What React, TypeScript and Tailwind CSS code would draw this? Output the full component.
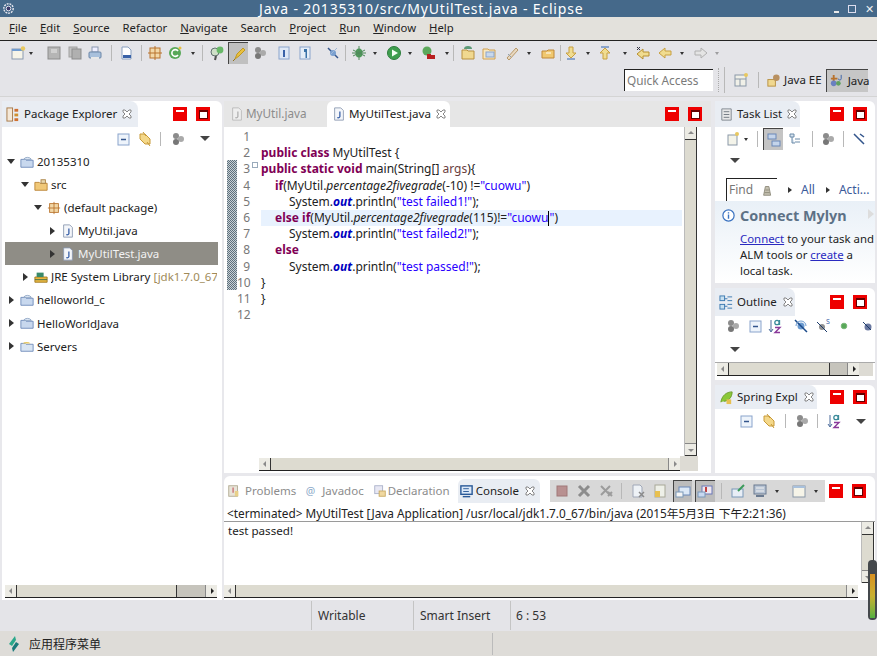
import React from "react";

const paths: Record<string, React.ReactNode> = {
  new: (<><rect x="2" y="4" width="11" height="10" fill="#f6f4e8" stroke="#8a9ab0" /><rect x="2" y="4" width="11" height="2" fill="#6f9bd0" /><circle cx="13" cy="3.5" r="2.2" fill="#e8c860" /></>),
  save: (<><rect x="2" y="2" width="12" height="12" fill="#b5b5b5" stroke="#8d8d8d" /><rect x="5" y="4" width="6" height="4" fill="#d0d0d0" /></>),
  saveall: (<><rect x="2" y="2" width="8" height="10" fill="#c2c2c2" stroke="#a0a0a0" /><rect x="5" y="4" width="9" height="10" fill="#b0b0b0" stroke="#8d8d8d" /></>),
  print: (<><rect x="5" y="2" width="6" height="5" fill="#eef" stroke="#8a98b0" /><rect x="2" y="7" width="12" height="6" rx="1" fill="#a8c0dc" stroke="#6b86a8" /><rect x="4" y="12" width="8" height="2" fill="#e8e8e8" /></>),
  bin: (<><path d="M4 2h6l3 3v9H4z" fill="#fff" stroke="#8aa0c0" /><path d="M5 10h8v3H5z" fill="#3a62a8" /></>),
  pkg: (<><rect x="3" y="3" width="10" height="10" fill="#f2d8a8" stroke="#b8722c" /><path d="M8 1v14M1 8h14" stroke="#b8722c" /></>),
  g: (<><circle cx="8" cy="8" r="6" fill="#58a858" /><path d="M11 6a3.4 3.4 0 1 0 0 4" fill="none" stroke="#fff" strokeWidth="1.6" /><circle cx="13" cy="3" r="1.5" fill="#e8c040" /></>),
  find: (<><circle cx="6" cy="7" r="4" fill="#cfe0c8" stroke="#607070" /><path d="M7 11l-1 4" stroke="#505050" strokeWidth="2" /><circle cx="11" cy="5" r="3.4" fill="#68b868" /></>),
  pen: (<><path d="M4 13l2-5 6-6 2 2-6 6z" fill="#e8c040" stroke="#c09820" /><path d="M2 15l2-2" stroke="#907020" /></>),
  balls: (<><circle cx="6" cy="5" r="3" fill="#8c8c8c" /><circle cx="11" cy="8" r="3" fill="#aaa" /><circle cx="6" cy="11" r="3" fill="#777" /></>),
  boxi: (<><rect x="3" y="2" width="10" height="12" fill="#dfe8f6" stroke="#8aa4cc" /><path d="M7 5h2v7H7z" fill="#3a62a8" /></>),
  para: (<><rect x="3" y="2" width="10" height="12" fill="#e6eef8" stroke="#8aa4cc" /><path d="M7 4h3v9H8.500V7H7z" fill="#3a72a8" /></>),
  pin: (<><path d="M3 3l10 10" stroke="#35558c" strokeWidth="1.500" /><circle cx="8" cy="8" r="3" fill="#7aa0d0" /><path d="M12 3l-7 7" stroke="#a0b8d8" /></>),
  bug: (<><ellipse cx="8" cy="8" rx="3.500" ry="4.500" fill="#4e9a5a" /><path d="M8 1v14M2 5l12 6M14 5L2 11M1 8h14" stroke="#4e8a5a" /></>),
  run: (<><circle cx="8" cy="8" r="6.500" fill="#3e9e4e" stroke="#2e7e3e" /><path d="M6 4.500l6 3.500-6 3.500z" fill="#f4fff4" /></>),
  ext: (<><circle cx="6" cy="6" r="4.500" fill="#5ca85c" /><rect x="6" y="9" width="4" height="5" fill="#b82020" /><rect x="10" y="10" width="4" height="4" fill="#b82020" /></>),
  folder: (<><path d="M2 5h5l1 1h6v8H2z" fill="#f0d890" stroke="#b89040" /><path d="M4 4a4 3 0 0 1 8 0z" fill="#5c9a78" /></>),
  folder2: (<><path d="M2 4h5l1 1h6v9H2z" fill="#f8e8c0" stroke="#d0a050" /><rect x="5" y="7" width="8" height="5" fill="#c8d8ec" stroke="#8aa4cc" /></>),
  wand: (<><path d="M3 13L12 3l2 2-9 10z" fill="#e8d8c0" stroke="#b89868" /><path d="M4 9l3 3" stroke="#90a0b0" /></>),
  folder3: (<><path d="M2 6h5l1-1h6v8H2z" fill="#f0c870" stroke="#c08838" /><path d="M6 8h5" stroke="#fff" /></>),
  down: (<><path d="M6 2h4v6h3l-5 5-5-5h3z" fill="#f0dc90" stroke="#c8a040" /><path d="M4 14h8" stroke="#8aa4cc" strokeWidth="2" /></>),
  up: (<><path d="M6 14V8H3l5-5 5 5h-3v6z" fill="#f0dc90" stroke="#c8a040" /><path d="M4 2h8" stroke="#8aa4cc" strokeWidth="2" /></>),
  backs: (<><path d="M14 7v4H8v3L2 9l6-5v3z" fill="#f0dc90" stroke="#b89030" /><path d="M2 2l3 3M5 2L2 5" stroke="#334" /></>),
  left: (<path d="M14 6v4H8v3L2 8l6-5v3z" fill="#f0dc90" stroke="#c8a040" />),
  right: (<path d="M2 6v4h6v3l6-5-6-5v3z" fill="#e4e4e4" stroke="#b0b0b0" />),
  persp: (<><rect x="2" y="3" width="11" height="11" fill="#f0f0e8" stroke="#8a98a8" /><path d="M2 7h11M7 7v7" stroke="#8a98a8" /><circle cx="13" cy="3" r="2" fill="#e8c860" /></>),
  jee: (<><rect x="2" y="7" width="8" height="7" fill="#f0d890" stroke="#b89040" /><circle cx="11" cy="5" r="3.500" fill="#b89060" /></>),
  java: (<><path d="M2 6h7M5 2v7" stroke="#b8722c" strokeWidth="2" /><circle cx="5" cy="11" r="3" fill="#6a80c0" /><circle cx="10" cy="11" r="2.500" fill="#60a060" /><path d="M13 2v4a1.500 1.500 0 0 1-3 0" fill="none" stroke="#3a62a8" /></>),
  pe: (<><rect x="1" y="1" width="6" height="14" fill="#f4e8d8" stroke="#a87848" /><rect x="9" y="2" width="4" height="3" fill="#d07030" /><rect x="9" y="7" width="4" height="3" fill="#d09030" /><rect x="9" y="12" width="4" height="3" fill="#d07030" /></>),
  collapse: (<><rect x="2" y="3" width="11" height="11" fill="#eef4fb" stroke="#8aa4cc" /><path d="M5 8.500h5" stroke="#33558c" strokeWidth="1.500" /></>),
  link: (<path d="M3 3h5l5 5v5H8L3 8zM6 1l3 4M10 11l3 4" fill="#f4d88a" stroke="#c89a38" />),
  az: (<><path d="M4 2v11M2 11l2 3 2-3" stroke="#4a6a9a" fill="none" /><circle cx="10" cy="4.500" r="2.200" fill="none" stroke="#3a8a9a" strokeWidth="1.300" /><path d="M12.500 2v5" stroke="#3a8a9a" strokeWidth="1.300" /><path d="M8 9.500h5l-5 5h5" fill="none" stroke="#8a3a9a" strokeWidth="1.400" /></>),
  jfile: (<><path d="M3 1h7l3 3v11H3z" fill="#f4f6fa" stroke="#8a98b0" /><path d="M9 5v6a2 2 0 0 1-3 1" fill="none" stroke="#3a62a8" strokeWidth="1.500" /></>),
  jfileg: (<><path d="M3 1h7l3 3v11H3z" fill="#eee" stroke="#b8b8b8" /><path d="M9 5v6a2 2 0 0 1-3 1" fill="none" stroke="#b0b0b0" strokeWidth="1.500" /></>),
  proj: (<><path d="M1 5h5l1 1h8v8H1z" fill="#c8d8ee" stroke="#6a88b8" /><path d="M4 5a5 4 0 0 1 9 0z" fill="#e8f0fa" stroke="#88a0c0" /></>),
  srcf: (<><path d="M1 5h5l1 1h8v8H1z" fill="#f0c878" stroke="#b88030" /><rect x="8" y="2" width="5" height="4" fill="#e8d8b0" stroke="#a88040" /></>),
  jre: (<><path d="M1 8h14v6H1z" fill="#e8b840" stroke="#a07820" /><path d="M3 3h8v5H3z" fill="#3a8a6a" /><path d="M1 11h14" stroke="#3a6a4a" /></>),
  tl: (<><path d="M3 2h10v12H3z" fill="#e8e8e8" stroke="#808890" /><path d="M5 5h6M5 8h6M5 11h6" stroke="#707880" /></>),
  tn: (<><rect x="3" y="4" width="9" height="10" fill="#f4f4ea" stroke="#8a98a8" /><circle cx="12" cy="3" r="2" fill="#e8c860" /></>),
  tree: (<><rect x="2" y="2" width="8" height="5" fill="#c4d4ea" stroke="#6a88b8" /><rect x="6" y="9" width="8" height="5" fill="#c4d4ea" stroke="#6a88b8" /></>),
  tree2: (<path d="M3 3h4v3H3zM8 8h5M8 11h5M5 6v6h3" fill="#d8e4f0" stroke="#6a8aa8" />),
  link2: (<path d="M3 3l10 10M9 3l4 3" stroke="#33558c" strokeWidth="1.500" fill="none" />),
  out: (<><rect x="1" y="1" width="5" height="5" fill="#c8e0f0" stroke="#3a78b0" /><rect x="1" y="10" width="5" height="5" fill="#c8e0f0" stroke="#3a78b0" /><path d="M6 4h3M6 12h3M9 2h5M9 6h5M9 10h5M9 14h5" stroke="#3a78b0" /></>),
  hf: (<><circle cx="8" cy="8" r="3.500" fill="#6a9ad0" /><path d="M2 2l12 12" stroke="#1a4a8a" strokeWidth="1.500" /><path d="M3 8a5 5 0 0 1 10 0" fill="none" stroke="#6a9ad0" /></>),
  hs: (<><circle cx="7" cy="9" r="3" fill="#909090" /><path d="M2 4l10 10" stroke="#1a3a6a" /><text x="11" y="6" fontSize="7" fill="#3a62a8">S</text></>),
  dot: (<circle cx="8" cy="8" r="2.800" fill="#58a858" stroke="#7ab87a" />),
  hl: (<><circle cx="9" cy="9" r="3.500" fill="#6a78a0" /><path d="M4 4l8 8" stroke="#1a3a6a" /></>),
  spring: (<><path d="M2 13C3 6 8 2 14 2c0 6-4 10-9 10" fill="#8ac838" stroke="#6a9a28" /><path d="M8 10h5v5H8z" fill="#e8c050" /></>),
  prob: (<><rect x="2" y="2" width="10" height="12" fill="#e8e4d8" stroke="#b0a890" /><path d="M6 4h2v6H6z" fill="#d08a8a" /><rect x="9" y="8" width="4" height="6" fill="#e8d088" /></>),
  at: (<text x="2" y="13" fontSize="12" fill="#8aa8c8">@</text>),
  decl: (<><rect x="2" y="2" width="9" height="9" fill="#e8e8f4" stroke="#a8b0c8" /><rect x="7" y="8" width="7" height="6" fill="#f0d8a0" stroke="#c8a860" /></>),
  console: (<><rect x="2" y="2" width="12" height="9" fill="#dbe8f8" stroke="#2a5a98" strokeWidth="1.500" /><path d="M4 13.500h8" stroke="#2a5a98" strokeWidth="1.500" /><path d="M4.500 5h6M4.500 8h6" stroke="#2a5a98" /></>),
  term: (<rect x="3" y="3" width="10" height="10" fill="#b89090" stroke="#a07878" />),
  x1: (<path d="M3 3l10 10M13 3L3 13" stroke="#8c8c8c" strokeWidth="3" />),
  x2: (<path d="M3 3l9 9M12 3l-9 9M10 9l4 4M14 9l-4 4" stroke="#9c9c9c" strokeWidth="2" />),
  clr: (<><path d="M3 2h7l2 2v10H3z" fill="#eef2f6" stroke="#a0a8b8" /><path d="M9 9l5 5M14 9l-5 5" stroke="#8a8a8a" strokeWidth="1.500" /></>),
  lock: (<><rect x="3" y="2" width="10" height="12" fill="#eef0e8" stroke="#a8a898" /><rect x="3" y="8" width="5" height="6" fill="#e8c050" /></>),
  wrap: (<><rect x="4" y="3" width="11" height="8" fill="#dce8f6" stroke="#6a88b8" /><rect x="1" y="8" width="7" height="5" fill="#f4f4f4" stroke="#7a98b8" /></>),
  wrap2: (<><rect x="5" y="2" width="10" height="8" fill="#f0e8f0" stroke="#6a78b8" /><path d="M9 3v5" stroke="#c04040" strokeWidth="2" /><rect x="1" y="8" width="7" height="5" fill="#c8d8f0" stroke="#7a98b8" /></>),
  pinc: (<><rect x="2" y="6" width="11" height="8" fill="#e8eef6" stroke="#7a98b8" /><path d="M8 8l6-6" stroke="#3a9a5a" strokeWidth="2" /></>),
  disp: (<><rect x="2" y="2" width="12" height="9" fill="#b8c4d4" stroke="#6a7a90" /><path d="M4 5h8M4 8h8" stroke="#f0f0f0" /><path d="M4 13h8" stroke="#6a7a90" strokeWidth="2" /></>),
  open: (<><rect x="2" y="3" width="12" height="11" fill="#f6f4e8" stroke="#8a98a8" /><rect x="2" y="3" width="12" height="2" fill="#a8c0dc" /></>),
  findi: (<path d="M3 14l2-10h4l2 10zM5 8h4M4 11h6" fill="#c4c0b0" stroke="#8c8878" />),
  info: (<><circle cx="8" cy="8" r="6" fill="#fff" stroke="#3a72c0" strokeWidth="1.300" /><path d="M8 7v4.500M8 4.500v1.300" stroke="#3a72c0" strokeWidth="1.500" /></>),
  srv: (<><path d="M1 5h5l1 1h8v8H1z" fill="#d8e4f2" stroke="#6a88b8" /><path d="M3 5a5 3 0 0 1 9 0z" fill="#e8c860" /></>),
};

function I({ n, c = "", s = 16 }: { n: string; c?: string; s?: number }) {
  return (
    <svg viewBox="0 0 16 16" width={s} height={s} className={`shrink-0 ${c}`}>
      {paths[n]}
    </svg>
  );
}

function Dd({ c = "" }: { c?: string }) {
  return <span className={`shrink-0 w-0 h-0 mx-[1px] border-x-[2px] border-x-transparent border-t-[3px] border-t-[#333] ${c}`} />;
}

function Sep({ c = "", h = "h-[16px]" }: { c?: string; h?: string }) {
  return <span className={`shrink-0 w-[1px] bg-[#b8b8b8] ${h} ${c}`} />;
}

function ViewMenu({ c = "" }: { c?: string }) {
  return <span className={`shrink-0 w-0 h-0 border-x-[5px] border-x-transparent border-t-[5px] border-t-[#444] ${c}`} />;
}

function Close({ c = "" }: { c?: string }) {
  return (
    <svg viewBox="0 0 10 10" width="10" height="10" className={`shrink-0 ${c}`}>
      <path d="M1 1h2l2 2 2-2h2v2L7 5l2 2v2H7L5 7 3 9H1V7l2-2-2-2z" fill="#fff" stroke="#6a6a6a" strokeWidth="0.800" />
    </svg>
  );
}

function MinMax({ c = "" }: { c?: string }) {
  return (
    <div className={`flex items-center gap-[9px] shrink-0 ${c}`}>
      <span className="w-[14px] h-[14px] bg-[#ee0000] flex justify-center pt-[3px]">
        <span className="w-[8px] h-[2px] bg-white" />
      </span>
      <span className="w-[14px] h-[14px] bg-[#ee0000] flex items-center justify-center">
        <span className="w-[9px] h-[9px] bg-white border-t-[2px] border-[#600] border-x border-b" />
      </span>
    </div>
  );
}

function Arrow({ dir, dark = false }: { dir: "l" | "r" | "u" | "d"; dark?: boolean }) {
  const col = dark ? "#222" : "#8a8a8a";
  const d = { l: "M5 1v6L2 4z", r: "M3 1v6l3-3z", u: "M1 5h6L4 2z", d: "M1 3h6L4 6z" }[dir];
  return (
    <svg viewBox="0 0 8 8" width="8" height="8">
      <path d={d} fill={col} />
    </svg>
  );
}

function HBar({ c, rest = "", dark = false }: { c: string; rest?: string; dark?: boolean }) {
  return (
    <div className={`flex h-[13px] bg-[#dddbd0] border-b border-[#222] shrink-0 ${c}`}>
      <span className="w-[12px] bg-[#ecebe4] border-r border-[#333] flex items-center justify-center shrink-0"><Arrow dir="l" /></span>
      <span className="flex-1" />
      {rest && <span className={`${rest} bg-[#c6c4bc] border-l border-[#333]`} />}
      <span className="w-[12px] bg-[#ecebe4] border-l border-[#888] flex items-center justify-center shrink-0"><Arrow dir="r" dark={dark} /></span>
    </div>
  );
}

function VBar({ c }: { c: string }) {
  return (
    <div className={`flex flex-col w-[13px] bg-[#dddbd0] border-r border-[#333] border-l border-l-[#bbb] shrink-0 ${c}`}>
      <span className="h-[13px] bg-[#ecebe4] border-b border-[#333] flex items-center justify-center shrink-0"><Arrow dir="u" /></span>
      <span className="flex-1" />
      <span className="h-[13px] bg-[#ecebe4] border-t border-[#888] border-b border-b-[#333] flex items-center justify-center shrink-0"><Arrow dir="d" /></span>
    </div>
  );
}

function ViewTab({ icon, label, w, closeMl }: { icon: string; label: string; w: string; closeMl: string }) {
  return (
    <div className={`flex items-center h-full rounded-tr-lg bg-[#e9edf3] pl-[4px] shrink-0 ${w}`}>
      <I n={icon} s={15} />
      <span className="ml-[3px] text-[11.5px] text-[#222] whitespace-nowrap">{label}</span>
      <Close c={closeMl} />
    </div>
  );
}

function K({ children }: { children: React.ReactNode }) {
  return <b className="text-[#7f0055]">{children}</b>;
}
function S({ children }: { children: React.ReactNode }) {
  return <span className="text-[#2a00ff]">{children}</span>;
}
function Out() {
  return <b className="italic text-[#0000c0]">out</b>;
}
function P() {
  return <i>percentage2fivegrade</i>;
}

function Println({ t }: { t: string }) {
  return (
    <div className="pl-[28px]">System.<Out />.println(<S>"{t}"</S>);</div>
  );
}

function TreeRow({ arrow, icon, pad, children, sel = false }: { arrow?: "o" | "c"; icon: string; pad: string; children: React.ReactNode; sel?: boolean }) {
  return (
    <div className={`flex items-center h-[23.1px] text-[11.5px] ${pad} ${sel ? "bg-[#8f8d86] text-[#f2f2f2]" : "text-[#222]"}`}>
      <span className="w-[10px] flex justify-center shrink-0">
        {arrow === "o" && <span className="w-0 h-0 border-x-[4px] border-x-transparent border-t-[5px] border-t-[#333]" />}
        {arrow === "c" && <span className="w-0 h-0 border-y-[4px] border-y-transparent border-l-[5px] border-l-[#333]" />}
      </span>
      <I n={icon} c="ml-[4px]" s={14} />
      <span className="ml-[3px] whitespace-nowrap">{children}</span>
    </div>
  );
}

export default function App() {
  return (
    <div className="relative w-[877px] h-[656px] overflow-hidden flex flex-col bg-[#e6e6ea] text-[12px] font-['Noto_Sans','Noto_Sans_CJK_SC',sans-serif]">
      {/* title bar */}
      <div className="h-[17px] bg-[#45698a] flex items-center text-white shrink-0 relative">
        <svg viewBox="0 0 16 16" width="15" height="15" className="ml-[1px]">
          <circle cx="8" cy="8" r="5" fill="none" stroke="#e8e8f0" strokeWidth="1.500" strokeDasharray="2 1" />
          <circle cx="8" cy="8" r="2.500" fill="#3a3a6a" stroke="#e8e8f0" />
        </svg>
        <span className="ml-[243px] text-[14px] tracking-[0.82px] leading-[17px] whitespace-nowrap">Java - 20135310/src/MyUtilTest.java - Eclipse</span>
        <div className="ml-auto mr-[3px] flex items-center gap-[9px]">
          <span className="w-[5px] h-[2px] bg-[#e8e8e8] mt-[6px]" />
          <span className="w-[8px] h-[8px] border border-[#dde]" />
          <span className="text-[11px] leading-none text-[#eee]">✕</span>
        </div>
      </div>
      {/* menu */}
      <div className="h-[24px] bg-[#e3e1dc] border-b border-b-[#222] flex items-center gap-[13px] pl-[9px] text-[11.3px] text-[#222] shrink-0">
        {[["F", "ile"], ["E", "dit"], ["S", "ource"], ["", "Refactor"], ["N", "avigate"], ["", "Search"], ["P", "roject"], ["R", "un"], ["W", "indow"], ["H", "elp"]].map(([a, b]) => (
          <span key={b}><span className="underline">{a}</span>{b}</span>
        ))}
      </div>
      {/* toolbar */}
      <div className="h-[56px] shrink-0 bg-[#e4e4e8] border-b border-[#d4d4d4] flex flex-col">
        <div className="h-[24px] flex items-center">
          <I n="new" c="ml-[10px]" /><Dd c="ml-[3px]" />
          <I n="save" c="ml-[12px]" /><I n="saveall" c="ml-[5px]" /><I n="print" c="ml-[4px]" />
          <Sep c="ml-[8px]" /><I n="bin" c="ml-[6px]" /><Sep c="ml-[7px]" />
          <I n="pkg" c="ml-[5px]" /><I n="g" c="ml-[4px]" /><Dd c="ml-[8px]" /><Sep c="ml-[6px]" />
          <I n="find" c="ml-[6px]" />
          <span className="ml-[3px] w-[20px] h-[22px] bg-[#c0c0c0] border-l border-t border-[#444] flex items-center justify-center"><I n="pen" /></span>
          <I n="balls" c="ml-[4px]" /><I n="boxi" c="ml-[8px]" /><I n="para" c="ml-[5px]" /><I n="pin" c="ml-[12px]" />
          <Sep c="ml-[4px]" /><I n="bug" c="ml-[5px]" /><Dd c="ml-[6px]" />
          <I n="run" c="ml-[8px]" /><Dd c="ml-[6px]" /><I n="ext" c="ml-[8px]" /><Dd c="ml-[8px]" />
          <Sep c="ml-[3px]" /><I n="folder" c="ml-[6px]" /><I n="folder2" c="ml-[5px]" /><I n="wand" c="ml-[7px]" /><Dd c="ml-[7px]" />
          <I n="folder3" c="ml-[8px]" /><Sep c="ml-[4px]" /><I n="down" c="ml-[2px]" /><Dd c="ml-[7px]" />
          <I n="up" c="ml-[6px]" /><Dd c="ml-[10px]" /><I n="backs" c="ml-[7px]" /><I n="left" c="ml-[6px]" />
          <Dd c="ml-[7px]" /><I n="right" c="ml-[8px]" /><Dd c="ml-[6px] opacity-40" />
        </div>
        <div className="h-[31px] flex items-center pl-[624px] pb-[1px]">
          <div className="w-[89px] h-[22px] bg-white border-l border-t border-[#222] flex items-center pl-[2px] text-[11.8px] text-[#7a7a7a]">Quick Access</div>
          <span className="ml-[5px] w-[1px] h-[24px] border-l border-dotted border-[#aaa]" />
          <Sep c="ml-[5px]" h="h-[26px]" />
          <I n="persp" c="ml-[8px]" /><Sep c="ml-[9px]" />
          <I n="jee" c="ml-[7px]" s={15} /><span className="ml-[3px] text-[11.5px] text-[#222]">Java EE</span>
          <span className="ml-[4px] w-[42px] h-[23px] bg-[#c6c6c6] border-l border-t border-[#444] flex items-center pl-[2px] text-[11.5px] text-[#222]"><I n="java" s={15} /><span className="ml-[4px]">Java</span></span>
        </div>
      </div>

      {/* workbench */}
      <div className="h-[503px] shrink-0 flex pt-[4px] pl-[2px] bg-[#e8e8ec]">
        {/* package explorer */}
        <div className="w-[220px] h-[499px] bg-white rounded-t-md flex flex-col shrink-0">
          <div className="h-[26px] flex items-center">
            <ViewTab icon="pe" label="Package Explorer" w="w-[136px]" closeMl="ml-[5px]" />
            <MinMax c="ml-[35px]" />
          </div>
          <div className="h-[23px] flex items-center">
            <I n="collapse" c="ml-[114px]" /><I n="link" c="ml-[5px]" /><Sep c="ml-[7px]" h="h-[14px]" />
            <I n="balls" c="ml-[9px]" /><ViewMenu c="ml-[14px]" />
          </div>
          <div className="flex-1">
            <TreeRow arrow="o" icon="proj" pad="pl-[4px]">20135310</TreeRow>
            <TreeRow arrow="o" icon="srcf" pad="pl-[18px]">src</TreeRow>
            <TreeRow arrow="o" icon="pkg" pad="pl-[31px]">(default package)</TreeRow>
            <TreeRow arrow="c" icon="jfile" pad="pl-[45px]">MyUtil.java</TreeRow>
            <div className="pl-[3px] pr-[4px]"><TreeRow arrow="c" icon="jfile" pad="pl-[42px]" sel>MyUtilTest.java</TreeRow></div>
            <TreeRow arrow="c" icon="jre" pad="pl-[18px]"><span className="block w-[166px] overflow-hidden">JRE System Library <span className="text-[#a08a58]">[jdk1.7.0_67]</span></span></TreeRow>
            <TreeRow arrow="c" icon="proj" pad="pl-[4px]">helloworld_c</TreeRow>
            <TreeRow arrow="c" icon="proj" pad="pl-[4px]">HelloWorldJava</TreeRow>
            <TreeRow arrow="c" icon="srv" pad="pl-[4px]">Servers</TreeRow>
          </div>
          <HBar c="w-[212px] ml-[3px] mb-[2px]" rest="w-[29px]" dark />
        </div>

        <div className="ml-[2px] w-[651px] flex flex-col">
          <div className="h-[372px] flex">
            {/* editor */}
            <div className="w-[487px] bg-white rounded-t-md flex flex-col shrink-0">
              <div className="h-[26px] flex items-center bg-[#e6e6e6]">
                <div className="flex items-center w-[103px] pl-[6px] text-[#8c8c8c]"><I n="jfileg" s={14} /><span className="ml-[2px] text-[11.7px]">MyUtil.java</span></div>
                <div className="flex items-center w-[123px] h-[26px] bg-white rounded-t-md pl-[5px] text-[#222]">
                  <I n="jfile" s={14} /><span className="ml-[3px] text-[11.6px]">MyUtilTest.java</span><Close c="ml-[5px]" />
                </div>
                <MinMax c="ml-[215px]" />
              </div>
              <div className="flex h-[331px]">
                <div className="w-[3px]" />
                <div className="w-[10px] pt-[33px]">
                  <div className="h-[130px] bg-[repeating-conic-gradient(#5e707c_0_25%,#c8d0d6_0_50%)] bg-[length:2px_2px]" />
                </div>
                <div className="w-[13px] pt-[2px] text-right text-[#787878] text-[12px] leading-[16.2px]">
                  {[1, 2, 3, 4, 5, 6, 7, 8, 9, 10, 11, 12].map((n) => <div key={n}>{n}</div>)}
                </div>
                <div className="w-[11px] pt-[35px] pl-[2px]">
                  <span className="block w-[6px] h-[6px] border border-[#9ab] bg-white" />
                </div>
                <div className="w-[421px] pt-[2px] text-[#222] text-[12px] leading-[16.2px] whitespace-nowrap">
                  <div className="h-[16.2px]" />
                  <div><K>public class</K> MyUtilTest {"{"}</div>
                  <div><K>public static void</K> main(String[] <span className="text-[#6a3e3e]">args</span>){"{"}</div>
                  <div className="pl-[14px]"><K>if</K>(MyUtil.<P />(-10) !=<S>"cuowu"</S>)</div>
                  <Println t="test failed1!" />
                  <div className="pl-[14px] bg-[#e8f2fe]"><K>else if</K>(MyUtil.<P />(115)!=<S>"cuowu</S><span className="inline-block w-[1px] h-[15px] align-middle bg-black" /><S>"</S>)</div>
                  <Println t="test failed2!" />
                  <div className="pl-[14px]"><K>else</K></div>
                  <Println t="test passed!" />
                  <div>{"}"}</div>
                  <div>{"}"}</div>
                </div>
                <div className="w-[2px]" />
                <VBar c="h-[329px]" />
              </div>
              <div className="flex h-[15px]">
                <HBar c="w-[421px] ml-[35px]" />
                <div className="w-[18px] h-[15px] bg-[#dddbd4] -mt-[2px]" />
              </div>
            </div>
            {/* right stack */}
            <div className="ml-[4px] w-[160px] flex flex-col shrink-0">
              <div className="h-[182px] bg-white rounded-t-md">
                <div className="h-[26px] flex items-center">
                  <ViewTab icon="tl" label="Task List" w="w-[85px]" closeMl="ml-[5px]" />
                  <MinMax c="ml-[30px]" />
                </div>
                <div className="h-[22px] mt-[1px] flex items-center">
                  <I n="tn" c="ml-[10px]" /><Dd c="ml-[3px]" /><Sep c="ml-[8px]" />
                  <span className="ml-[5px] w-[20px] h-[22px] bg-[#c4c4c4] border-l border-t border-[#444] flex items-center justify-center"><I n="tree" /></span>
                  <I n="tree2" c="ml-[4px]" /><Sep c="ml-[9px]" /><I n="balls" c="ml-[7px]" /><Sep c="ml-[7px]" /><I n="link2" c="ml-[7px]" />
                </div>
                <div className="h-[21px] flex items-center"><ViewMenu c="ml-[15px]" /></div>
                <div className="h-[23px] mt-[7px] flex items-center">
                  <div className="ml-[11px] w-[51px] h-[23px] bg-white border-l border-t border-[#222] flex items-center pl-[2px] text-[#777]">Find<I n="findi" c="ml-[8px]" s={14} /></div>
                  <span className="ml-[11px] w-0 h-0 border-y-[3px] border-y-transparent border-l-[4px] border-l-[#333]" />
                  <span className="ml-[9px] text-[#3a5a9a]">All</span>
                  <span className="ml-[11px] w-0 h-0 border-y-[3px] border-y-transparent border-l-[4px] border-l-[#333]" />
                  <span className="ml-[9px] text-[#3a5a9a]">Acti...</span>
                </div>
                <div className="h-[82px] bg-gradient-to-b from-[#e9f0f7] to-white rounded-b-md pl-[25px] pt-[4px] relative overflow-hidden">
                  <div className="absolute left-[6px] top-[7px]"><I n="info" s={15} /></div>
                  <div className="text-[14.4px] font-bold text-[#5d7186] leading-[22px] whitespace-nowrap">Connect Mylyn</div>
                  <div className="absolute right-[1px] top-[8px] w-0 h-0 border-y-[5px] border-y-transparent border-l-[6px] border-l-[#ddd]" />
                  <div className="mt-[4px] text-[#222] text-[11.4px] leading-[16px] whitespace-nowrap">
                    <div><span className="text-[#2a2ac0] underline">Connect</span> to your task and</div>
                    <div>ALM tools or <span className="text-[#2a2ac0] underline">create</span> a</div>
                    <div>local task.</div>
                  </div>
                </div>
              </div>
              <div className="mt-[5px] h-[92px] bg-white rounded-t-md">
                <div className="h-[28px] flex items-center">
                  <ViewTab icon="out" label="Outline" w="w-[80px]" closeMl="ml-[6px]" />
                  <MinMax c="ml-[35px]" />
                </div>
                <div className="h-[20px] flex items-center">
                  <I n="balls" c="ml-[10px]" /><I n="collapse" c="ml-[7px]" /><I n="az" c="ml-[3px]" /><I n="hf" c="ml-[10px]" />
                  <I n="hs" c="ml-[6px]" /><I n="dot" c="ml-[5px]" /><I n="hl" c="ml-[7px]" />
                </div>
                <div className="h-[26px] flex items-center"><ViewMenu c="ml-[15px]" /></div>
                <div className="flex border-t border-[#aaa]">
                  <HBar c="w-[142px] ml-[2px]" rest="w-[18px]" dark />
                  <div className="w-[14px] h-[13px] bg-[#dddbd4]" />
                </div>
              </div>
              <div className="mt-[5px] h-[88px] bg-white rounded-t-md">
                <div className="h-[24px] flex items-center">
                  <ViewTab icon="spring" label="Spring Expl" w="w-[102px]" closeMl="ml-[6px]" />
                  <MinMax c="ml-[13px]" />
                </div>
                <div className="h-[24px] flex items-center">
                  <I n="collapse" c="ml-[24px]" /><I n="link" c="ml-[6px]" /><Sep c="ml-[8px]" h="h-[14px]" />
                  <I n="balls" c="ml-[8px]" /><Sep c="ml-[7px]" h="h-[14px]" /><I n="az" c="ml-[8px]" /><ViewMenu c="ml-[14px]" />
                </div>
              </div>
            </div>
          </div>

          {/* console */}
          <div className="mt-[3px] h-[124px] w-[651px] bg-white rounded-t-md flex flex-col">
            <div className="h-[28px] pt-[2px] flex items-center text-[#8c8c8c] text-[11.5px]">
              <I n="prob" c="ml-[3px]" s={14} /><span className="ml-[4px]">Problems</span>
              <I n="at" c="ml-[8px]" s={14} /><span className="ml-[4px]">Javadoc</span>
              <I n="decl" c="ml-[9px]" s={14} /><span className="ml-[1px]">Declaration</span>
              <div className="ml-[8px] w-[82px] h-[24px] rounded-t-md bg-[#e9edf3] flex items-center pl-[1px] text-[#222] shrink-0">
                <I n="console" s={15} /><span className="ml-[2px]">Console</span><Close c="ml-[6px]" />
              </div>
              <div className="ml-[10px] w-[275px] h-[22px] bg-[#d8d8d8] flex items-center shrink-0">
                <I n="term" c="ml-[4px]" /><I n="x1" c="ml-[6px]" /><I n="x2" c="ml-[6px]" /><Sep c="ml-[7px]" />
                <I n="clr" c="ml-[8px]" /><I n="lock" c="ml-[6px]" />
                <span className="ml-[5px] w-[19px] h-[22px] bg-[#bcbcbc] border-l border-t border-[#444] flex items-center justify-center"><I n="wrap" /></span>
                <span className="ml-[3px] w-[20px] h-[22px] bg-[#bcbcbc] border-l border-t border-[#444] flex items-center justify-center"><I n="wrap2" /></span>
                <Sep c="ml-[6px]" /><I n="pinc" c="ml-[8px]" /><I n="disp" c="ml-[6px]" /><Dd c="ml-[7px]" />
                <I n="open" c="ml-[11px]" /><Dd c="ml-[7px]" />
              </div>
              <MinMax c="ml-[4px]" />
            </div>
            <div className="h-[18px] pl-[3px] text-[#222] text-[11.8px] leading-[18px] border-b border-[#9a9a9a] whitespace-nowrap">
              &lt;terminated&gt; MyUtilTest [Java Application] /usr/local/jdk1.7.0_67/bin/java (2015年5月3日 下午2:21:36)
            </div>
            <div className="h-[63px] flex">
              <div className="w-[637px] pl-[4px] text-[#222] text-[11.6px] leading-[18px]">test passed!</div>
              <VBar c="h-[61px]" />
            </div>
            <HBar c="w-[634px]" dark />
          </div>
        </div>
      </div>

      {/* status */}
      <div className="h-[31px] shrink-0 bg-[#e4e4e8] flex items-center text-[#333] text-[12px]">
        <span className="ml-[311px] w-[102px] h-[29px] border-l border-[#c4c4c4] pl-[6px] leading-[30px]">Writable</span>
        <span className="w-[97px] h-[29px] border-l border-[#c4c4c4] pl-[6px] leading-[30px] whitespace-nowrap">Smart Insert</span>
        <span className="h-[29px] border-l border-[#c4c4c4] pl-[5px] leading-[30px]">6 : 53</span>
      </div>
      {/* taskbar */}
      <div className="h-[25px] shrink-0 bg-[#dedcd8] flex items-center text-[12px] text-[#222]">
        <svg viewBox="0 0 12 16" width="12" height="16" className="ml-[8px]">
          <path d="M7 0L1 8l3 2 4-6z" fill="#2aa88a" />
          <path d="M5 16l6-8-3-2-4 6z" fill="#1a7a7a" />
        </svg>
        <span className="ml-[9px] font-['Noto_Sans_CJK_SC','Noto_Sans',sans-serif]">应用程序菜单</span>
        <span className="ml-[391px] w-[1px] h-[22px] bg-[#bbb]" />
      </div>

      {/* volume meter tray overlay */}
      <div className="absolute left-[868px] top-[560px] w-[9px] h-[60px] rounded-[4px] bg-[#44484c] p-[2px] pt-[14px]">
        <div className="w-full h-full bg-gradient-to-b from-[#d89020] via-[#c8b030] to-[#50b040]" />
      </div>
    </div>
  );
}
